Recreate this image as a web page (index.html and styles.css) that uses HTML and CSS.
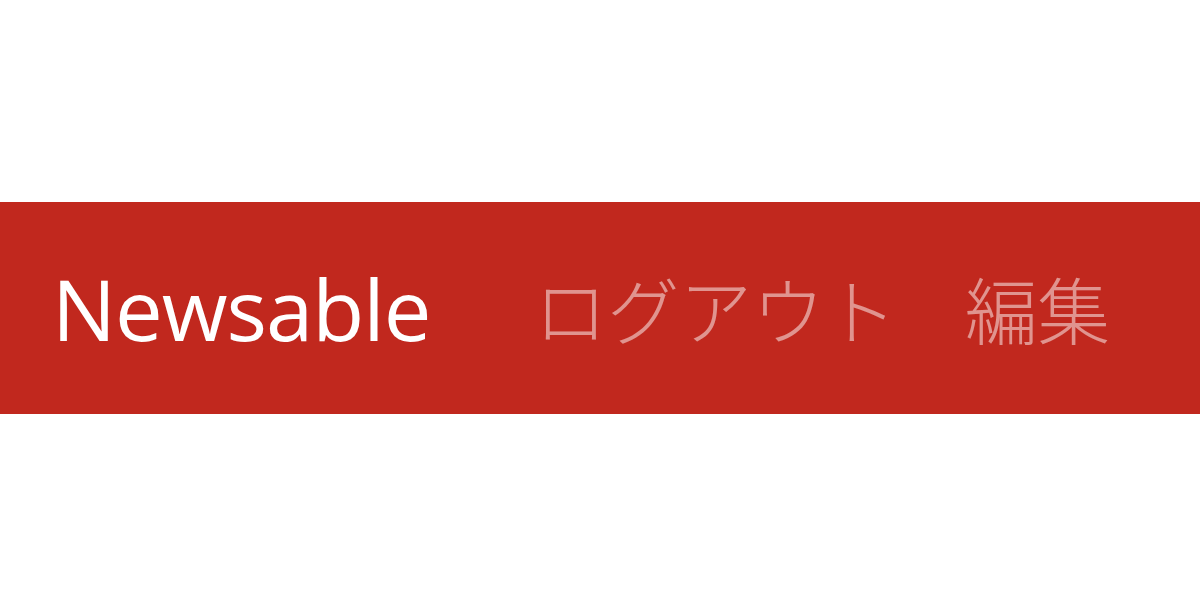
FILE: index.html
```html
<!DOCTYPE html>
<html lang="ja">
<head>
<meta charset="utf-8">
<title>Newsable</title>
<link rel="stylesheet" href="styles.css">
</head>
<body>
<div class="page">
  <nav class="navbar">
    <a class="brand" href="#">Newsable</a>
    <ul class="nav-links">
      <li><a href="#">ログアウト</a></li>
      <li><a href="#">編集</a></li>
    </ul>
  </nav>
</div>
</body>
</html>
```
FILE: styles.css
```css
html, body {
  margin: 0;
  padding: 0;
  background: #ffffff;
}
.page {
  padding-top: 202px;
}
.navbar {
  height: 212px;
  background: #c1281e;
  display: flex;
  align-items: center;
  padding-left: 52px;
  box-sizing: border-box;
}
.brand {
  font-family: "Open Sans", "Noto Sans", sans-serif;
  font-size: 85px;
  color: #ffffff;
  text-decoration: none;
  line-height: 1;
  margin-right: 104px;
  letter-spacing: -1px;
}
.nav-links {
  list-style: none;
  margin: 0;
  padding: 0;
  display: flex;
  gap: 68px;
}
.nav-links a {
  font-family: "Noto Sans CJK JP", sans-serif;
  font-weight: 300;
  font-size: 72.5px;
  color: rgba(255, 255, 255, 0.5);
  text-decoration: none;
  line-height: 1;
}
```
